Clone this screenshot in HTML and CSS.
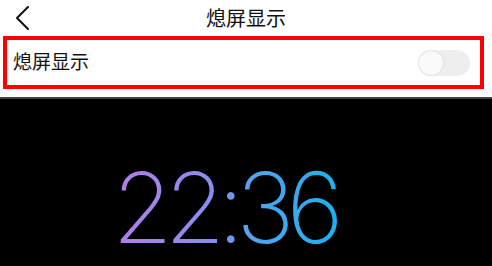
FILE: index.html
```html
<!DOCTYPE html>
<html lang="zh">
<head>
<meta charset="utf-8">
<link rel="stylesheet" href="styles.css">
</head>
<body>
<div class="page">
  <header class="topbar">
    <svg class="back" width="20" height="28" viewBox="0 0 20 28"><path d="M15 3 L4 14 L15 25" fill="none" stroke="#111" stroke-width="2" stroke-linecap="round" stroke-linejoin="round"/></svg>
    <div class="title">熄屏显示</div>
  </header>
  <div class="row">
    <span class="label">熄屏显示</span>
    <span class="toggle"><span class="knob"></span></span>
  </div>
  <div class="sep"></div>
  <div class="preview">
    <div class="clock">22:36</div>
  </div>
</div>
</body>
</html>
```
FILE: styles.css
```css
html, body { margin: 0; padding: 0; }
body { width: 492px; height: 266px; overflow: hidden; background: #fff; font-family: "Noto Sans CJK SC", "Noto Sans", sans-serif; }
.page { display: flex; flex-direction: column; height: 266px; }
.topbar { height: 36px; flex: none; display: flex; align-items: center; justify-content: center; position: relative; }
.back { position: absolute; left: 13px; top: 4px; }
.title { font-size: 20px; color: #111; line-height: 36px; }
.row { flex: none; margin: 0 8px 0 3px; height: 41px; border: 4px solid #f00; display: flex; align-items: center; justify-content: space-between; padding: 0 10px 4px 6px; }
.label { font-size: 19px; color: #111; }
.toggle { width: 52px; height: 26px; border-radius: 13px; background: #eeeeee; position: relative; display: block; margin-top: 5px; }
.knob { position: absolute; left: 1px; top: 1px; width: 24px; height: 24px; border-radius: 50%; background: #fafafa; box-shadow: 0 0 2px rgba(0,0,0,0.15); }
.sep { flex: none; height: 8px; border-bottom: 2px solid #444; }
.preview { flex: 1; background: #000; display: flex; justify-content: center; padding-top: 60px; padding-right: 36px; }
.clock { font-family: "Inter", "Roboto", sans-serif; font-weight: 160; font-size: 98px; line-height: 1; height: 100px; letter-spacing: -8px; padding-right: 8px; background: linear-gradient(90deg, #b57ce9 0%, #8c8cf0 40%, #4aa6ee 65%, #17b3ef 100%); -webkit-background-clip: text; background-clip: text; color: transparent; }
```
